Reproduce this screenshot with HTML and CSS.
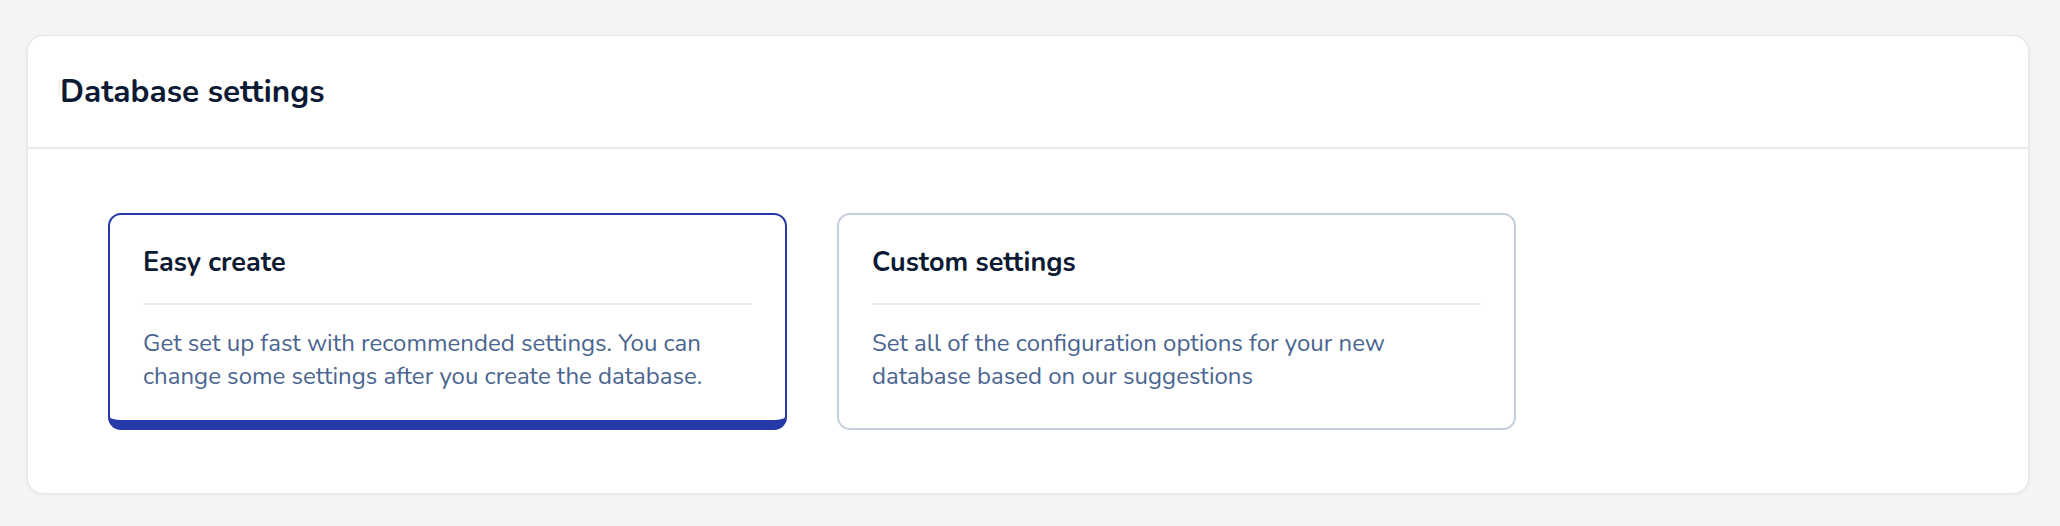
FILE: index.html
```html
<!DOCTYPE html>
<html lang="en">
<head>
<meta charset="utf-8">
<title>Database settings</title>
<link rel="stylesheet" href="styles.css">
</head>
<body>
  <section class="panel">
    <header class="panel-header">
      <h2 class="panel-title">Database settings</h2>
    </header>
    <div class="panel-body">
      <div class="option option-selected">
        <h3 class="option-title">Easy create</h3>
        <div class="option-divider"></div>
        <p class="option-desc">Get set up fast with recommended settings. You can change some settings after you create the database.</p>
      </div>
      <div class="option">
        <h3 class="option-title">Custom settings</h3>
        <div class="option-divider"></div>
        <p class="option-desc">Set all of the configuration options for your new database based on our suggestions</p>
      </div>
    </div>
  </section>
</body>
</html>
```
FILE: styles.css
```css
* { box-sizing: border-box; }

html, body { height: 100%; }

body {
  margin: 0;
  padding: 35px 31px 32px 27px;
  background: #f3f4f6;
  font-family: "Nunito", "Lato", "Noto Sans", sans-serif;
  color: #0c1a33;
}

.panel {
  background: #ffffff;
  border: 1px solid #e4e6ea;
  border-radius: 16px;
  box-shadow: 0 1px 4px rgba(15, 23, 42, 0.05);
  height: 459px;
  display: flex;
  flex-direction: column;
}

.panel-header {
  height: 113px;
  display: flex;
  align-items: center;
  padding: 0 32px;
  border-bottom: 2px solid #e8e9ee;
}

.panel-title {
  margin: 0;
  font-size: 31.5px;
  font-weight: 700;
  color: #0c1a33;
}

.panel-body {
  display: flex;
  gap: 50px;
  padding: 64px 80px 0;
}

.option {
  width: 679px;
  height: 217px;
  border: 2px solid #c6cfdd;
  border-radius: 13px;
  padding: 30px 33px 0;
  background: #ffffff;
}

.option-selected {
  border-color: #2539a8;
  border-bottom-width: 10px;
}

.option-title {
  margin: 0;
  font-size: 27px;
  line-height: 36px;
  font-weight: 700;
  color: #0c1a33;
}

.option-divider {
  height: 2px;
  background: #ebebf1;
  margin-top: 22px;
}

.option-desc {
  margin: 22px 0 0;
  max-width: 580px;
  font-size: 24px;
  line-height: 33.3px;
  color: #4a6590;
}
```
